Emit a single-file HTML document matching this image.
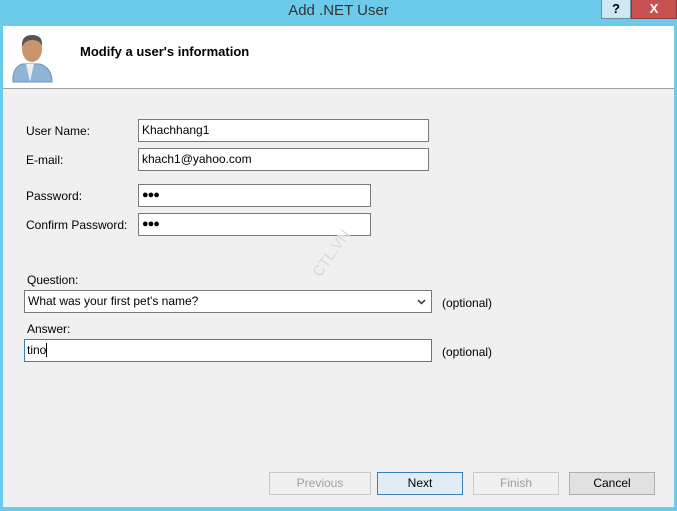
<!DOCTYPE html>
<html><head><style>
*{margin:0;padding:0;box-sizing:border-box}
body{width:677px;height:511px;background:#6ccbea;position:relative;overflow:hidden;font-family:"Liberation Sans",sans-serif;font-size:12px;color:#000}
.abs{position:absolute}
.title{left:0;top:2px;width:677px;text-align:center;font-size:15px;color:#333}
.win{left:3px;top:26px;width:671px;height:481px;background:#f0f0f0}
.hdr{left:3px;top:26px;width:671px;height:63px;background:#fff;border-bottom:1px solid #a0a0a0}
.inp{background:#fff;border:1px solid #7a7a7a;height:23px;padding:3px 3px;font-size:12px;line-height:15px}
.lbl{font-size:12px}
.btn{height:23px;border:1px solid #adadad;background:#e1e1e1;text-align:center;line-height:21px;font-size:12px}
.dis{color:#a0a0a0;background:#f0f0f0;border-color:#c8c8c8}
.dots{font-size:11px;letter-spacing:-1px}
</style></head><body>
<div class="abs title">Add .NET User</div>
<div class="abs" style="left:601px;top:0;width:30px;height:19px;background:#cde8f3;border:1px solid #6f8b98;border-top:none;text-align:center;font-weight:bold;font-size:13px;line-height:17px">?</div>
<div class="abs" style="left:631px;top:0;width:46px;height:19px;background:#c75050;border:1px solid #8a3a3a;border-top:none;text-align:center;font-weight:bold;font-size:13px;line-height:17px;color:#fff">X</div>
<div class="abs win"></div>
<div class="abs hdr"></div>
<svg class="abs" style="left:10px;top:32px" width="46" height="52" viewBox="0 0 46 52">
<path d="M3 50 Q2 36 12 32 L30 32 Q42 36 42 50 Z" fill="#8fb4d8" stroke="#6d93b8"/>
<path d="M16 32 L20 50 L24 32 Z" fill="#e8eef4"/>
<ellipse cx="22" cy="17" rx="10" ry="13" fill="#c9946a"/>
<path d="M12 15 Q11 3 22 3 Q33 3 32 14 Q30 8 22 8 Q15 8 12 15Z" fill="#555"/>
</svg>
<div class="abs" style="left:80px;top:44px;font-weight:bold;font-size:13px">Modify a user's information</div>

<div class="abs lbl" style="left:26px;top:124px">User Name:</div>
<div class="abs inp" style="left:138px;top:119px;width:291px">Khachhang1</div>
<div class="abs lbl" style="left:26px;top:153px">E-mail:</div>
<div class="abs inp" style="left:138px;top:148px;width:291px">khach1@yahoo.com</div>
<div class="abs lbl" style="left:26px;top:189px">Password:</div>
<div class="abs inp dots" style="left:138px;top:184px;width:233px">●●●</div>
<div class="abs lbl" style="left:26px;top:218px">Confirm Password:</div>
<div class="abs inp dots" style="left:138px;top:213px;width:233px">●●●</div>
<div class="abs" style="left:305px;top:245px;transform:rotate(-55deg);color:#d8d8d8;font-size:15px">CTL.VN</div>

<div class="abs lbl" style="left:27px;top:273px">Question:</div>
<div class="abs inp" style="left:24px;top:290px;width:408px">What was your first pet's name?<svg style="position:absolute;right:5px;top:8px" width="9" height="6" viewBox="0 0 9 6"><path d="M1 1 L4.5 4.5 L8 1" fill="none" stroke="#333" stroke-width="1.5"/></svg></div>
<div class="abs lbl" style="left:442px;top:296px">(optional)</div>
<div class="abs lbl" style="left:27px;top:322px">Answer:</div>
<div class="abs inp" style="left:24px;top:339px;width:408px;border-color:#3c7fb1;padding-left:2px">tino<span style="border-left:1px solid #000"></span></div>
<div class="abs lbl" style="left:442px;top:345px">(optional)</div>

<div class="abs btn dis" style="left:269px;top:472px;width:102px">Previous</div>
<div class="abs btn" style="left:377px;top:472px;width:86px;background:#dfebf5;border-color:#3c7fb1">Next</div>
<div class="abs btn dis" style="left:473px;top:472px;width:86px">Finish</div>
<div class="abs btn" style="left:569px;top:472px;width:86px">Cancel</div>
</body></html>
